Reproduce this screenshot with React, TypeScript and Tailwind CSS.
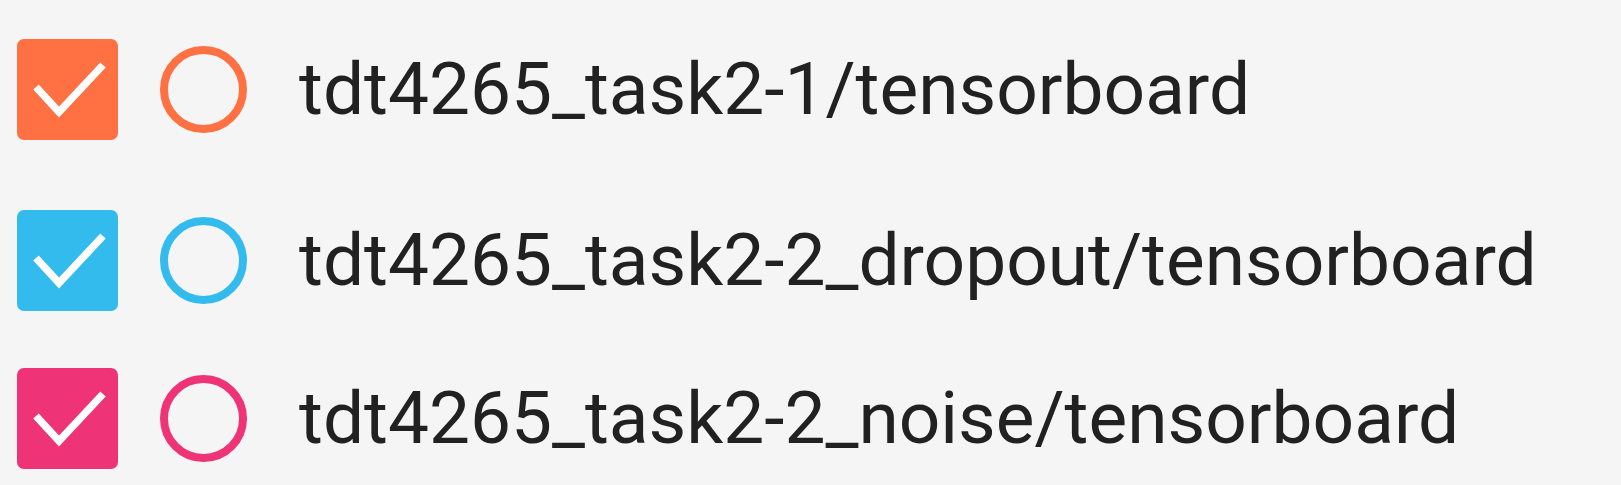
const runs = [
  { name: "tdt4265_task2-1/tensorboard", color: "#ff7043", gap: "mt-[39px]" },
  { name: "tdt4265_task2-2_dropout/tensorboard", color: "#33bbee", gap: "mt-[70px]" },
  { name: "tdt4265_task2-2_noise/tensorboard", color: "#ee3377", gap: "mt-[57px]" },
];

const App = () => {
  return (
    <div className="w-[1621px] h-[485px] bg-[#f5f5f5] overflow-hidden font-['Roboto',sans-serif] text-[#212121]">
      <div className="flex flex-col pl-[17px]">
        {runs.map((r) => (
          <div key={r.name} className={`flex flex-row items-center h-[101px] ${r.gap}`}>
            <div
              className="w-[101px] h-[101px] rounded-[7px] flex items-center justify-center shrink-0"
              style={{ backgroundColor: r.color }}
            >
              <svg width="101" height="101" viewBox="0 0 101 101" fill="none">
                <path d="M19 48 L42 73 L86 26" stroke="white" strokeWidth="7.5" strokeLinecap="butt" strokeLinejoin="miter" />
              </svg>
            </div>
            <div
              className="ml-[42px] w-[87px] h-[87px] rounded-full border-[8px] shrink-0"
              style={{ borderColor: r.color }}
            />
            <span className="ml-[52px] text-[73px] leading-none whitespace-nowrap">{r.name}</span>
          </div>
        ))}
      </div>
    </div>
  );
};

export default App;
